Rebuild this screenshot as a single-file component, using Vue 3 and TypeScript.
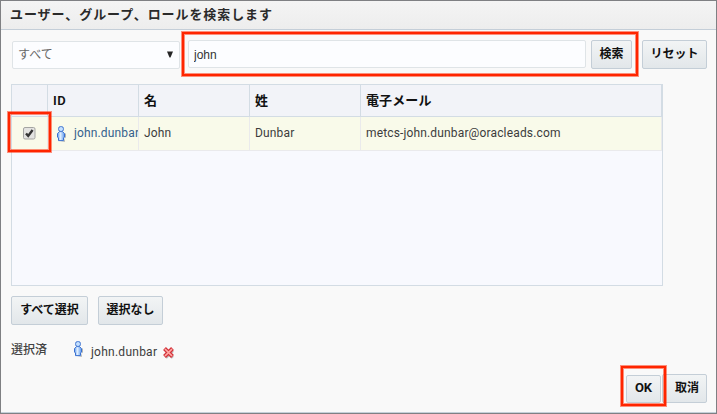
<script setup lang="ts">
import { ref } from 'vue'

interface User {
  id: string
  first: string
  last: string
  email: string
}

const keyword = ref('john')
const users = ref<User[]>([
  { id: 'john.dunbar', first: 'John', last: 'Dunbar', email: 'metcs-john.dunbar@oracleads.com' },
])
</script>

<template>
  <div class="dialog">
    <svg class="defs" width="0" height="0" aria-hidden="true">
      <defs>
        <linearGradient id="body" x1="0" x2="1" y1="0" y2="0">
          <stop offset="0" stop-color="#5b96ec" />
          <stop offset=".4" stop-color="#e4f2ff" />
          <stop offset="1" stop-color="#5d98ee" />
        </linearGradient>
        <symbol id="person" viewBox="0 0 9 16">
          <path d="M3 15.7h5V12.5L9 11V8l-1-1v5l-1 3z" fill="#b2b5b2" />
          <path d="M2.5 5.6h3L7.5 7.6v3.4L6.5 12v2.6h-5V12l-1-1V7.6z" fill="url(#body)" stroke="#3a70cf" stroke-width="1" />
          <rect x="1.6" y=".6" width="4.8" height="4.8" rx="1.9" fill="#c4e0ff" stroke="#3a70cf" />
        </symbol>
      </defs>
    </svg>
    <header class="title"><span>ユーザー、グループ、ロールを検索します</span></header>
    <main class="content">
      <div class="search">
        <div class="select"><span>すべて</span>
          <svg width="6" height="7" viewBox="0 0 6 7"><path d="M0 .5h6L3.5 6.5h-1z" fill="#252525" /></svg>
        </div>
        <input v-model="keyword" class="field" type="text" />
        <button class="btn find"><span>検索</span></button>
        <button class="btn reset"><span>リセット</span></button>
      </div>
      <div class="grid">
        <div class="row head">
          <div></div><div class="id">ID</div><div>名</div><div>姓</div><div class="mail">電子メール</div>
        </div>
        <div v-for="u in users" :key="u.id" class="row item">
          <div class="check">
            <svg width="13" height="13" viewBox="0 0 13 13">
              <rect x=".5" y=".5" width="11.5" height="11.5" rx="1.5" fill="#e3e3e1" stroke="#a4a4a2" />
              <path d="M3 6.5l2.2 2.4L9.6 3" fill="none" stroke="#353535" stroke-width="2.4" />
            </svg>
          </div>
          <div class="user"><svg width="9" height="16"><use href="#person" /></svg><a>{{ u.id }}</a></div>
          <div><span>{{ u.first }}</span></div>
          <div><span>{{ u.last }}</span></div>
          <div><span>{{ u.email }}</span></div>
        </div>
      </div>
      <div class="actions">
        <button class="btn all"><span>すべて選択</span></button>
        <button class="btn none"><span>選択なし</span></button>
      </div>
      <div class="selected">
        <span class="label">選択済</span>
        <svg class="who" width="9" height="16"><use href="#person" /></svg>
        <span class="name">john.dunbar</span>
        <svg class="remove" width="12" height="12" viewBox="0 0 12 12">
          <path d="M2.8 3.8l7 7M9.8 3.8l-7 7" stroke="#bbb" stroke-width="3" />
          <path d="M1.5 1.5l8 8M9.5 1.5l-8 8" stroke="#d4323a" stroke-width="4" />
          <path d="M2 2l7 7M9 2l-7 7" stroke="#ffaaa6" stroke-width="1.7" />
        </svg>
      </div>
    </main>
    <footer class="footer">
      <button class="btn ok"><span>OK</span></button>
      <button class="btn cancel"><span>取消</span></button>
    </footer>
    <div class="mark mark-search"></div>
    <div class="mark mark-check"></div>
    <div class="mark mark-ok"></div>
  </div>
</template>

<style>
body { margin: 0; overflow: hidden; }
</style>

<style scoped>
* { box-sizing: border-box; }
.dialog {
  position: relative;
  display: flex;
  flex-direction: column;
  width: 717px;
  height: 414px;
  border: 1px solid #7f8083;
  background: #f9f9f9;
  box-shadow: inset 0 -1px #c4d0d9;
  color: #3c3c3c;
  font: 12px/16px Roboto, "Noto Sans CJK JP", sans-serif;
}
.defs { position: absolute; }
svg { display: block; flex: none; }
.title {
  height: 29px;
  padding: 4px 0 0 9px;
  border-bottom: 1px solid #c4ced8;
  background: linear-gradient(#f4f4f4, #ededed);
  color: #2a2a2a;
  font: bold 13px/18px "Noto Sans CJK JP", sans-serif;
  letter-spacing: .92px;
  white-space: nowrap;
}
.content { padding: 10px 0 0 10px; }
.search { display: flex; align-items: flex-start; height: 44px; }
.select {
  display: flex;
  align-items: center;
  justify-content: space-between;
  width: 168px;
  height: 28px;
  margin: 1px 8px 0 1px;
  padding: 0 6px 1px 5px;
  border: 1px solid #dfe4e7;
  border-radius: 2px;
  background: #fcfdff;
  color: #666;
  font-family: "Noto Sans CJK JP", sans-serif;
}
.select span { margin-top: -2px; }
.field {
  width: 398px;
  height: 28px;
  margin: 0 5px 0 0;
  padding: 1px 5px 0;
  border: 1px solid #dfe4e7;
  border-radius: 2px;
  outline: none;
  background: #fcfdff;
  color: #333;
  font: 12px "Liberation Sans", sans-serif;
}
.btn {
  height: 29px;
  padding: 0 0 3px;
  border: 1px solid #c4ced7;
  border-radius: 2px;
  background: linear-gradient(#f2f4f5, #e2e7ea);
  color: #111;
  font: bold 12px/16px "Noto Sans CJK JP", sans-serif;
  white-space: nowrap;
}
.find { width: 41px; }
.reset { width: 65px; margin-left: 10px; }
.grid {
  width: 652px;
  height: 202px;
  border: 1px solid #d3dce4;
  background: #f8f9fe;
}
.row { display: grid; grid-template-columns: 36px 91px 111px 111px 301px; }
.row > div { min-width: 0; overflow: hidden; padding-left: 5px; border-right: 1px solid #d3dce4; white-space: nowrap; }
.head {
  height: 32px;
  border-bottom: 1px solid #d3dce4;
  background: #f2f3f8;
  color: #111;
  font: bold 13px/30px "Noto Sans CJK JP", sans-serif;
}
.head .id { font: 600 13px/31px Roboto, sans-serif; letter-spacing: .5px; }
.head .mail { letter-spacing: .1px; }
.item { height: 34px; border-bottom: 1px solid #eaeaec; background: #f9faea; line-height: 32px; letter-spacing: .15px; }
.item > div { border-right-color: #eaeaec; }
.item .check { padding: 10px 0 0 11px; }
.item .user { display: flex; padding-left: 9px; }
.user svg { margin-top: 9px; }
.user a { margin-left: 8px; color: #35618d; }
.actions { display: flex; gap: 10px; padding-top: 10px; }
.all { width: 77px; }
.none { width: 65px; }
.selected { display: flex; align-items: flex-start; padding-top: 16px; }
.label { width: 63px; font: 500 12px/16px "Noto Sans CJK JP", sans-serif; color: #444; }
.name { margin: 3px 6px 0 8px; letter-spacing: .25px; }
.remove { margin-top: 6px; }
.footer { display: flex; margin: auto 9px 10px auto; align-items: flex-end; }
.footer .btn { height: 29px; }
.footer .ok { width: 35px; height: 28px; padding-bottom: 2px; font: 700 13px/16px Roboto, sans-serif; margin-right: 1px; }
.footer .cancel { width: 45px; padding-left: 5px; }
.mark {
  position: absolute;
  border: 2px solid #ff2500;
  box-shadow: 0 0 0 1px rgb(255 37 0 / .5), inset 0 0 0 1px rgb(255 37 0 / .5);
  pointer-events: none;
}
.mark-search { left: 181px; top: 31px; width: 456px; height: 44px; }
.mark-check { left: 7px; top: 111px; width: 43px; height: 40px; }
.mark-ok { left: 620px; top: 365px; width: 45px; height: 40px; }
</style>
